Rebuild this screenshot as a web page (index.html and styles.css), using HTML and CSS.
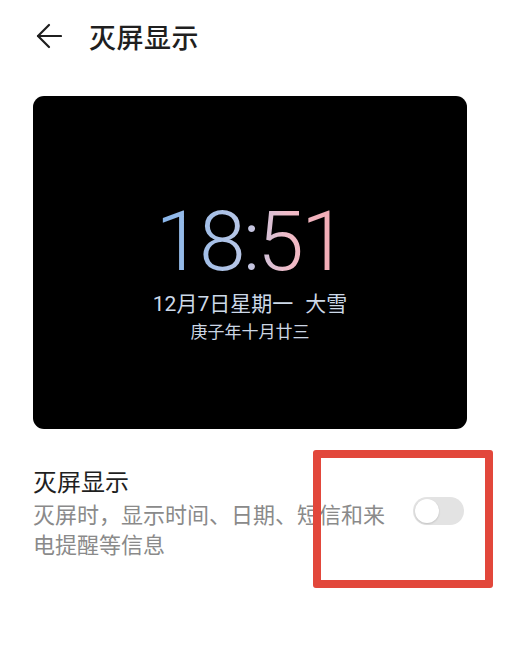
FILE: index.html
```html
<!DOCTYPE html>
<html lang="zh-CN">
<head>
    <meta charset="UTF-8">
    <meta name="viewport" content="width=device-width, initial-scale=1.0">
    <title>灭屏显示</title>
    <link rel="stylesheet" href="styles.css">
</head>
<body>

<header class="topbar">
    <a class="back" href="#" aria-label="返回">
        <svg width="26" height="26" viewBox="0 0 26 26" fill="none" stroke="#1f1f1f" stroke-width="2.2" stroke-linecap="round" stroke-linejoin="round">
            <path d="M25 13H2"/>
            <path d="M13 2L2 13l11 11"/>
        </svg>
    </a>
    <h1>灭屏显示</h1>
</header>

<main class="page">
    <!-- Preview of the always-on display -->
    <div class="preview">
        <div class="clock">18:51</div>
        <div class="date">12月7日星期一<span class="term">大雪</span></div>
        <div class="lunar">庚子年十月廿三</div>
    </div>

    <!-- Setting row -->
    <div class="setting">
        <div class="setting-text">
            <div class="setting-title">灭屏显示</div>
            <div class="setting-desc">灭屏时，显示时间、日期、短信和来电提醒等信息</div>
        </div>
        <div class="switch"><span class="knob"></span></div>
    </div>
</main>

<div class="highlight"></div>

</body>
</html>
```

FILE: styles.css
```css
body {
    font-family: Roboto, "Noto Sans CJK SC", sans-serif;
    background-color: #ffffff;
    color: #1f1f1f;
    margin: 0;
    padding: 0;
    width: 516px;
    height: 669px;
    overflow: hidden;
}
.topbar {
    display: flex;
    align-items: center;
    height: 72px;
    padding-left: 36px;
}
.back {
    display: flex;
    width: 26px;
    height: 26px;
}
.topbar h1 {
    margin: 0 0 0 27px;
    font-size: 27px;
    font-weight: 500;
    letter-spacing: 0.5px;
}
.page {
    padding: 24px 49px 0 33px;
}
.preview {
    background-color: #000000;
    border-radius: 11px;
    height: 333px;
    box-sizing: border-box;
    padding-top: 18px;
    display: flex;
    flex-direction: column;
    align-items: center;
    justify-content: center;
}
.clock {
    font-family: Roboto, sans-serif;
    font-weight: 300;
    font-size: 84px;
    line-height: 84px;
    letter-spacing: -3px;
    background: linear-gradient(90deg, #84b4ea 0%, #b7c6e6 45%, #f0bcc8 70%, #f4a8b0 100%);
    -webkit-background-clip: text;
    background-clip: text;
    color: transparent;
}
.date {
    margin-top: 6px;
    font-size: 21px;
    line-height: 28px;
    color: #cdd9e8;
}
.term {
    margin-left: 12px;
}
.lunar {
    margin-top: 3px;
    font-size: 17px;
    line-height: 22px;
    color: #cdd7e4;
}
.setting {
    display: flex;
    align-items: center;
    gap: 24px;
    margin-top: 38px;
    margin-right: 3px;
}
.setting-text {
    flex: 1;
}
.setting-title {
    font-size: 24px;
    line-height: 32px;
    color: #1f1f1f;
}
.setting-desc {
    font-size: 22px;
    line-height: 30px;
    color: #8a8a8a;
    margin-top: 2px;
}
.switch {
    width: 51px;
    height: 28px;
    border-radius: 14px;
    background-color: #e3e3e3;
    position: relative;
    flex-shrink: 0;
    margin-top: -6px;
}
.knob {
    position: absolute;
    left: 2px;
    top: 2px;
    width: 24px;
    height: 24px;
    border-radius: 50%;
    background-color: #ffffff;
    box-shadow: 0 1px 2px rgba(0, 0, 0, 0.15);
}
.highlight {
    position: absolute;
    left: 313px;
    top: 450px;
    width: 164px;
    height: 122px;
    border: 8px solid #e2473b;
    border-radius: 3px;
}
```
